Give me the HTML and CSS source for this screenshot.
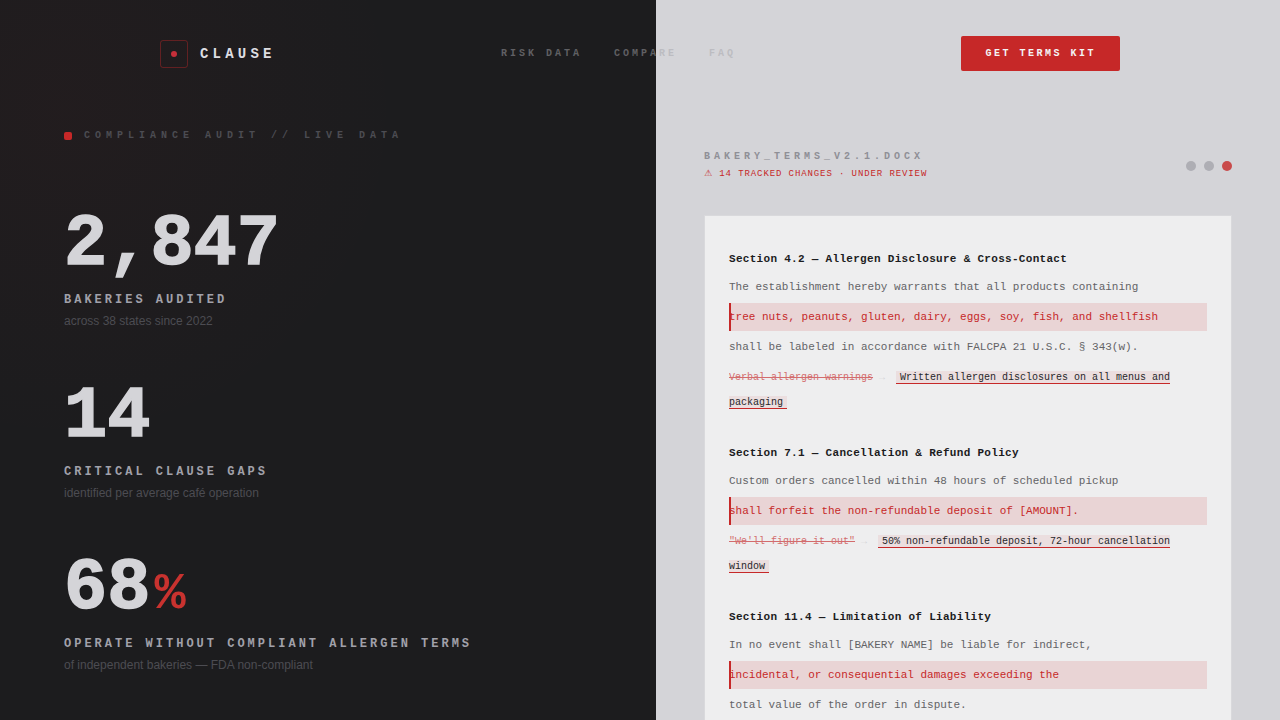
FILE: index.html
```html
<!DOCTYPE html>
<html lang="en">
<head>
    <meta charset="UTF-8">
    <meta name="viewport" content="width=device-width, initial-scale=1.0">
    <title>Clause</title>
    <link rel="stylesheet" href="styles.css">
</head>
<body>
    <header class="topbar">
        <div class="logo">
            <span class="logo-mark"><span class="logo-dot"></span></span>
            <span class="logo-text">CLAUSE</span>
        </div>
        <nav class="nav-links">
            <a href="#">RISK DATA</a>
            <a href="#">COMPARE</a>
            <a href="#">FAQ</a>
        </nav>
        <a class="cta" href="#">GET TERMS KIT</a>
    </header>

    <main class="split">
        <section class="panel-dark">
            <div class="eyebrow"><span class="eyebrow-dot"></span>COMPLIANCE AUDIT // LIVE DATA</div>

            <div class="stat">
                <div class="stat-number">2,847</div>
                <div class="stat-label">BAKERIES AUDITED</div>
                <div class="stat-sub">across 38 states since 2022</div>
            </div>
            <div class="stat">
                <div class="stat-number">14</div>
                <div class="stat-label">CRITICAL CLAUSE GAPS</div>
                <div class="stat-sub">identified per average café operation</div>
            </div>
            <div class="stat">
                <div class="stat-number">68<span class="stat-unit">%</span></div>
                <div class="stat-label">OPERATE WITHOUT COMPLIANT ALLERGEN TERMS</div>
                <div class="stat-sub">of independent bakeries — FDA non-compliant</div>
            </div>
        </section>

        <section class="panel-light">
            <div class="doc-head">
                <div>
                    <div class="doc-name">BAKERY_TERMS_V2.1.DOCX</div>
                    <div class="doc-status"><span class="warn">⚠</span> 14 TRACKED CHANGES · UNDER REVIEW</div>
                </div>
                <div class="doc-dots">
                    <span class="dot"></span>
                    <span class="dot"></span>
                    <span class="dot dot-active"></span>
                </div>
            </div>

            <article class="doc">
                <div class="clause">
                    <h3>Section 4.2 — Allergen Disclosure &amp; Cross-Contact</h3>
                    <p>The establishment hereby warrants that all products containing</p>
                    <p class="flag">tree nuts, peanuts, gluten, dairy, eggs, soy, fish, and shellfish</p>
                    <p>shall be labeled in accordance with FALCPA 21 U.S.C. § 343(w).</p>
                    <p class="redline"><del>Verbal allergen warnings</del> <span class="arrow">→</span> <ins>Written allergen disclosures on all menus and packaging</ins></p>
                </div>
                <div class="clause">
                    <h3>Section 7.1 — Cancellation &amp; Refund Policy</h3>
                    <p>Custom orders cancelled within 48 hours of scheduled pickup</p>
                    <p class="flag">shall forfeit the non-refundable deposit of [AMOUNT].</p>
                    <p class="redline"><del>"We'll figure it out"</del> <span class="arrow">→</span> <ins>50% non-refundable deposit, 72-hour cancellation window</ins></p>
                </div>
                <div class="clause">
                    <h3>Section 11.4 — Limitation of Liability</h3>
                    <p>In no event shall [BAKERY NAME] be liable for indirect,</p>
                    <p class="flag">incidental, or consequential damages exceeding the</p>
                    <p>total value of the order in dispute.</p>
                </div>
            </article>
        </section>
    </main>
</body>
</html>
```

FILE: styles.css
```css
* {
    box-sizing: border-box;
}

html, body {
    height: 100%;
}

body {
    margin: 0;
    overflow: hidden;
    font-family: "Liberation Mono", monospace;
    background-color: #d4d4d8;
}

/* top bar sits over both panels */
.topbar {
    position: absolute;
    top: 36px;
    left: 160px;
    right: 160px;
    display: flex;
    align-items: center;
    justify-content: space-between;
    height: 35px;
}

.logo {
    display: flex;
    align-items: center;
    gap: 12px;
}

.logo-mark {
    display: flex;
    align-items: center;
    justify-content: center;
    width: 28px;
    height: 28px;
    border: 1px solid rgba(198, 40, 40, 0.4);
    border-radius: 3px;
}

.logo-dot {
    width: 6px;
    height: 6px;
    border-radius: 50%;
    background-color: #c62f3a;
}

.logo-text {
    font-size: 14px;
    font-weight: bold;
    letter-spacing: 4.2px;
    color: #dedee2;
}

.nav-links {
    display: flex;
    gap: 32px;
}

.nav-links a {
    font-size: 10px;
    letter-spacing: 3px;
    font-weight: bold;
    color: rgba(165, 165, 170, 0.5);
    text-decoration: none;
}

.cta {
    padding: 12px 24px;
    font-size: 10px;
    line-height: 11px;
    font-weight: bold;
    letter-spacing: 2.5px;
    color: #f4f4f5;
    background-color: #c62828;
    border-radius: 2px;
    text-decoration: none;
}

.split {
    display: grid;
    grid-template-columns: 656px 1fr;
    height: 720px;
}

/* left side */
.panel-dark {
    padding: 129px 64px 0;
    background-color: #1c1c1e;
    background-image: radial-gradient(circle at 10% 15%, rgba(198, 40, 40, 0.035), transparent 40%);
}

.eyebrow {
    display: flex;
    align-items: center;
    gap: 12px;
    height: 12px;
    font-size: 10px;
    letter-spacing: 5px;
    font-weight: bold;
    color: #4c4c52;
    margin-bottom: 68px;
}

.eyebrow-dot {
    width: 8px;
    height: 8px;
    margin-top: 1px;
    border-radius: 2px;
    background-color: #c62828;
}

.stat {
    margin-bottom: 53px;
}

/* the numbers are heavier than the bold face alone */
.stat-number {
    font-size: 72px;
    line-height: 72px;
    font-weight: bold;
    color: #d4d4d8;
    -webkit-text-stroke: 1.5px #d4d4d8;
    margin-bottom: 12px;
}

.stat-unit {
    margin-left: 4px;
    font-size: 52px;
    line-height: 1;
    color: #c8322f;
    -webkit-text-stroke: 0;
}

.stat-label {
    font-size: 12px;
    line-height: 14px;
    font-weight: bold;
    letter-spacing: 3px;
    color: #a1a1aa;
    margin-bottom: 7px;
}

.stat-sub {
    font-family: "Liberation Sans", Arial, sans-serif;
    font-size: 12px;
    line-height: 14px;
    color: #4c4c52;
}

/* right side */
.panel-light {
    padding: 151px 48px 0;
    overflow: hidden;
}

.doc-head {
    display: flex;
    align-items: center;
    justify-content: space-between;
    margin-bottom: 35px;
}

.doc-name {
    font-size: 10px;
    line-height: 12px;
    font-weight: bold;
    letter-spacing: 4px;
    color: #8f8f96;
    margin-bottom: 4px;
}

.doc-status {
    font-size: 9px;
    line-height: 12px;
    letter-spacing: 0.9px;
    color: #c62828;
}

.warn {
    font-family: "DejaVu Sans", sans-serif;
}

.doc-dots {
    display: flex;
    gap: 8px;
    margin-top: 1px;
}

.dot {
    width: 10px;
    height: 10px;
    border-radius: 50%;
    background-color: #aeaeb4;
}

.dot-active {
    background-color: #c62828;
    opacity: 0.8;
}

.doc {
    padding: 31px 24px 0;
    background-color: #eeeeef;
    border: 1px solid #d9d9dc;
}

.clause {
    margin-bottom: 26px;
}

.clause h3 {
    margin: 0 0 3px;
    font-size: 11px;
    line-height: 25px;
    font-weight: bold;
    letter-spacing: 0.3px;
    color: #1c1c1e;
}

.clause p {
    margin: 0 0 5px;
    font-size: 11px;
    line-height: 25px;
    color: #636366;
}

.clause .flag {
    margin: -2px 0 4px;
    padding: 2px 0;
    line-height: 24px;
    color: #c62828;
    background-color: rgba(198, 40, 40, 0.13);
    box-shadow: inset 2px 0 0 #c62828;
}

.clause .redline {
    font-size: 10px;
    margin-bottom: 0;
}

del {
    color: #c62828;
    opacity: 0.65;
}

.arrow {
    color: #d4d4d8;
}

ins {
    margin-left: 5px;
    padding: 1px 4px 0;
    text-decoration: none;
    color: #27272a;
    background-color: rgba(198, 40, 40, 0.08);
    border-bottom: 1.5px solid #c62828;
}
```
